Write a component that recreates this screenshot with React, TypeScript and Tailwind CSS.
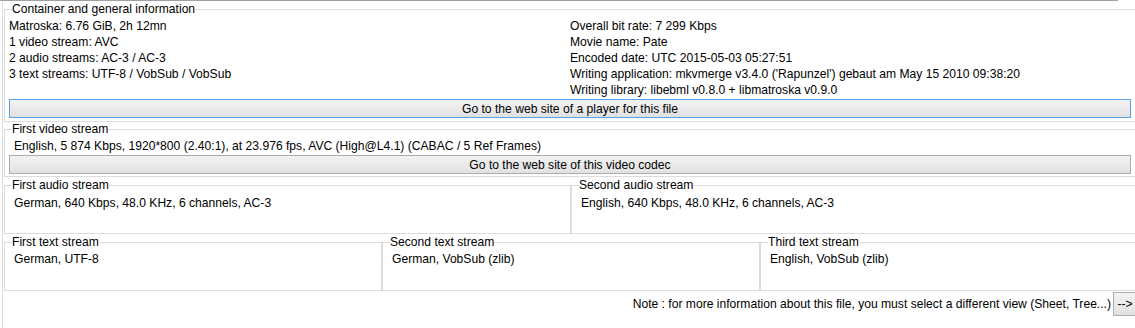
import React from 'react'

const leftLines = [
  'Matroska: 6.76 GiB, 2h 12mn',
  '1 video stream: AVC',
  '2 audio streams: AC-3 / AC-3',
  '3 text streams: UTF-8 / VobSub / VobSub',
]

const rightLines = [
  'Overall bit rate: 7 299 Kbps',
  'Movie name: Pate',
  'Encoded date: UTC 2015-05-03 05:27:51',
  "Writing application: mkvmerge v3.4.0 ('Rapunzel') gebaut am May 15 2010 09:38:20",
  'Writing library: libebml v0.8.0 + libmatroska v0.9.0',
]

const audio = [
  { title: 'First audio stream', text: 'German, 640 Kbps, 48.0 KHz, 6 channels, AC-3' },
  { title: 'Second audio stream', text: 'English, 640 Kbps, 48.0 KHz, 6 channels, AC-3' },
]

const texts = [
  { title: 'First text stream', text: 'German, UTF-8' },
  { title: 'Second text stream', text: 'German, VobSub (zlib)' },
  { title: 'Third text stream', text: 'English, VobSub (zlib)' },
]

const Group: React.FC<{ title: string; className?: string; children: React.ReactNode }> = ({ title, className, children }) => (
  <fieldset className={`border border-[#dcdcdc] min-w-0 ${className ?? ''}`}>
    <legend className="ml-[7px] leading-[14px] px-0">{title}</legend>
    {children}
  </fieldset>
)

const App: React.FC = () => {
  return (
    <div
      className="w-[1135px] h-[328px] overflow-hidden bg-white text-black text-[12.12px] leading-[16px]"
      style={{ fontFamily: '"Liberation Sans", Arial, sans-serif' }}
    >
      <div className="w-[1118px] h-px bg-[#a0a0a0]" />
      <div className="ml-[2px] w-[1136px] h-[327px] border-l border-[#dcdcdc] pl-[1px]">
        <Group title="Container and general information" className="mt-[1px] pr-[6px] pb-[3px]">
          <div className="grid grid-cols-[561px_1fr] pl-[4px] pt-[2px]">
            <div>
              {leftLines.map((l) => (
                <div key={l} className="whitespace-nowrap">{l}</div>
              ))}
            </div>
            <div>
              {rightLines.map((l) => (
                <div key={l} className="whitespace-nowrap">{l}</div>
              ))}
            </div>
          </div>
          <button className="mt-[1px] ml-[4px] w-[calc(100%-4px)] h-[19px] border border-[#5aa2ea] bg-gradient-to-b from-[#f3f3f3] to-[#e1e1e1] text-[12.12px] leading-[16px]">
            Go to the web site of a player for this file
          </button>
        </Group>

        <Group title="First video stream" className="pr-[6px] pb-[2px]">
          <div className="pl-[9px] pt-[2px] whitespace-nowrap">
            English, 5 874 Kbps, 1920*800 (2.40:1), at 23.976 fps, AVC (High@L4.1) (CABAC / 5 Ref Frames)
          </div>
          <button className="mt-[1px] ml-[4px] w-[calc(100%-4px)] h-[19px] border border-[#adadad] bg-gradient-to-b from-[#f3f3f3] to-[#e1e1e1] text-[12.12px] leading-[16px]">
            Go to the web site of this video codec
          </button>
        </Group>

        <div className="grid grid-cols-2 mt-[1px]">
          {audio.map((a) => (
            <Group key={a.title} title={a.title} className="pb-[22px]">
              <div className="pl-[9px] pt-[3px] whitespace-nowrap">{a.text}</div>
            </Group>
          ))}
        </div>

        <div className="grid grid-cols-3 mt-[1px]">
          {texts.map((t) => (
            <Group key={t.title} title={t.title} className="pb-[23px]">
              <div className="pl-[9px] pt-[2px] whitespace-nowrap">{t.text}</div>
            </Group>
          ))}
        </div>

        <div className="flex justify-end items-center mt-[1px] pr-[1px]">
          <span className="whitespace-nowrap mr-[2px]">
            Note : for more information about this file, you must select a different view (Sheet, Tree...)
          </span>
          <button className="w-[24px] h-[24px] border border-[#adadad] bg-gradient-to-b from-[#f3f3f3] to-[#e1e1e1] text-[12.12px] leading-[16px] shrink-0">
            {'-->'}
          </button>
        </div>
      </div>
    </div>
  )
}

export default App
